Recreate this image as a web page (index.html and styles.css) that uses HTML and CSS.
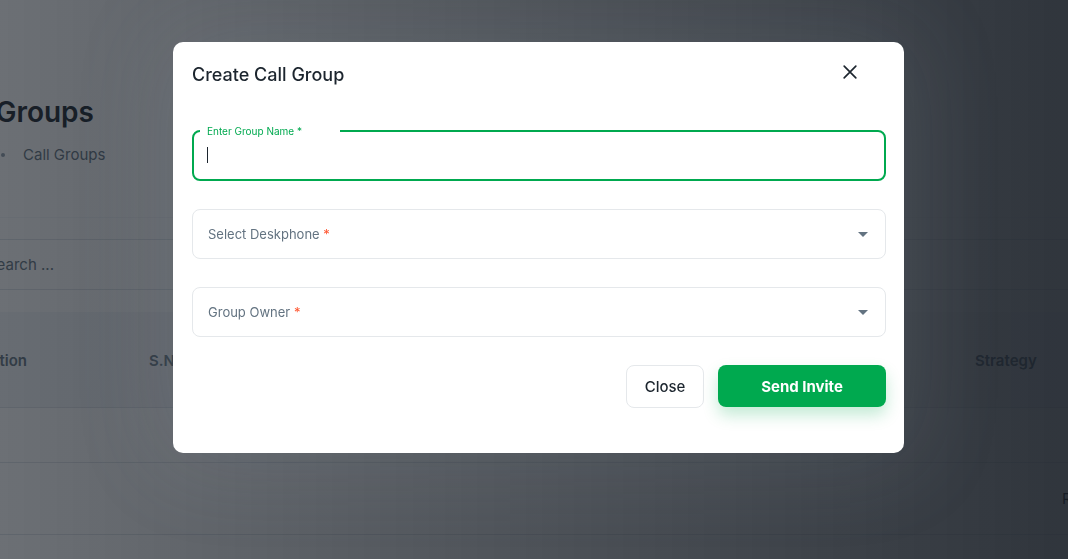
FILE: index.html
```html
<!DOCTYPE html>
<html lang="en">
<head>
  <meta charset="UTF-8" />
  <meta name="viewport" content="width=device-width, initial-scale=1.0"/>
  <title>Call Groups</title>
  <link rel="stylesheet" href="styles.css">
</head>
<body>
  <div class="page">
    <h1 class="page-title">Call Groups</h1>
    <div class="crumbs">
      <span class="crumb-dot"></span>
      <span>Call Groups</span>
    </div>

    <div class="card">
      <div class="search-row">
        <div class="search">Search ...</div>
      </div>
      <div class="table">
        <div class="thead">
          <div class="th">Action</div>
          <div class="th">S.No.</div>
          <div class="th">Group Name</div>
          <div class="th">Deskphone</div>
          <div class="th">Strategy</div>
        </div>
        <div class="tr"></div>
        <div class="tr"><div class="td"></div><div class="td"></div><div class="td"></div><div class="td"></div><div class="td far">Ring All</div></div>
      </div>
    </div>
  </div>

  <div class="overlay">
    <div class="modal">
      <div class="modal-head">
        <h2>Create Call Group</h2>
        <button class="x-btn" type="button" aria-label="close">
          <svg width="20" height="20" viewBox="0 0 24 24"><path d="M5 5 L19 19 M19 5 L5 19" stroke="#1c252e" stroke-width="2" stroke-linecap="round" fill="none"/></svg>
        </button>
      </div>

      <form class="modal-body" onsubmit="return false;">
        <fieldset class="field active">
          <legend>Enter Group Name *</legend>
          <span class="caret"></span>
        </fieldset>

        <div class="field select">
          <span>Select Deskphone <em>*</em></span>
          <span class="arrow"></span>
        </div>

        <div class="field select">
          <span>Group Owner <em>*</em></span>
          <span class="arrow"></span>
        </div>

        <div class="actions">
          <button type="button" class="btn btn-light">Close</button>
          <button type="button" class="btn btn-green">Send Invite</button>
        </div>
      </form>
    </div>
  </div>
</body>
</html>
```

FILE: styles.css
```css
* {
  box-sizing: border-box;
}
body {
  margin: 0;
  font-family: "Inter", "Noto Sans", sans-serif;
  background: #fff;
  color: #1c252e;
  height: 100vh;
  overflow: hidden;
}
.page {
  margin-left: -64px;
  width: 1200px;
  padding-top: 95px;
}
.page-title {
  margin: 0 0 0 1px;
  font-size: 28px;
  font-weight: 600;
  line-height: 34px;
  color: #1c252e;
}
.crumbs {
  display: flex;
  align-items: center;
  gap: 18px;
  margin-top: 17px;
  margin-left: 65px;
  font-size: 15px;
  line-height: 18px;
  color: #637381;
}
.crumb-dot {
  width: 4px;
  height: 4px;
  border-radius: 50%;
  background: #919eab;
}
.card {
  margin-top: 53px;
  border-top: 1px solid #f4f6f8;
  padding-top: 21px;
}
.search-row {
  border-top: 1px solid #dfe3e8;
  border-bottom: 1px solid #dfe3e8;
  height: 51px;
  display: flex;
  align-items: center;
}
.search {
  padding-left: 51px;
  font-size: 15px;
  color: #637381;
}
.table {
  margin-top: 22px;
}
.thead, .tr {
  display: grid;
  grid-template-columns: 169px 276px 275px 275px 200px;
  padding-left: 44px;
}
.thead {
  height: 96px;
  background: #f4f6f8;
  align-items: center;
  padding-top: 2px;
  border-bottom: 1px solid #dfe3e8;
}
.th {
  font-size: 15px;
  font-weight: 600;
  color: #637381;
}
.tr {
  height: 55px;
  border-bottom: 1px solid #dfe3e8;
  align-items: center;
  font-size: 15px;
}
.tr + .tr {
  height: 72px;
}
.far {
  padding-left: 87px;
}

.overlay {
  position: fixed;
  inset: 0;
  background: linear-gradient(to right, rgba(22, 28, 36, 0.63), rgba(22, 28, 36, 0.89));
  padding-top: 42px;
  padding-left: 173px;
}
.modal {
  width: 731px;
  height: 411px;
  background: #fff;
  border-radius: 10px;
  box-shadow: 0 0 90px 10px rgba(145, 158, 171, 0.16);
}
.modal-head {
  display: flex;
  align-items: center;
  justify-content: space-between;
  padding: 14px 44px 0 19px;
  height: 64px;
}
.modal-head h2 {
  margin: 0;
  font-size: 18px;
  font-weight: 500;
  color: #1c252e;
  margin-top: -14px;
}
.x-btn {
  border: none;
  background: none;
  padding: 0;
  margin-top: -18px;
  cursor: pointer;
  display: flex;
}
.modal-body {
  padding: 20px 18px 0 19px;
  display: flex;
  flex-direction: column;
  gap: 28px;
}
.field {
  height: 50px;
  border: 1px solid #e5e8eb;
  border-radius: 8px;
  margin: 0;
  padding: 0 15px;
  display: flex;
  align-items: center;
}
.field.active {
  border: 2px solid #00a94f;
  padding: 0 6px;
  display: block;
  margin-top: -1px;
  height: 56px;
}
.field.active legend {
  font-size: 10px;
  color: #00a94f;
  padding: 0 38px 0 7px;
  line-height: 12px;
}
.caret {
  display: block;
  width: 1px;
  height: 16px;
  background: #1c252e;
  margin: 10px 0 0 7px;
}
.select {
  justify-content: space-between;
  font-size: 13px;
  color: #637381;
}
.select em {
  font-style: normal;
  color: #ff5630;
}
.arrow {
  width: 0;
  height: 0;
  border-left: 5px solid transparent;
  border-right: 5px solid transparent;
  border-top: 5px solid #637381;
  margin-right: 2px;
}
.actions {
  display: flex;
  justify-content: flex-end;
  gap: 14px;
}
.btn {
  font-family: inherit;
  font-size: 15px;
  border-radius: 8px;
  cursor: pointer;
}
.btn-light {
  width: 78px;
  height: 43px;
  background: #fff;
  border: 1px solid #e5e8eb;
  color: #1c252e;
  font-weight: 500;
}
.btn-green {
  width: 168px;
  height: 42px;
  background: #00a94f;
  border: none;
  color: #fff;
  font-weight: 700;
  box-shadow: 0 8px 16px 0 rgba(0, 169, 79, 0.24);
}
```
